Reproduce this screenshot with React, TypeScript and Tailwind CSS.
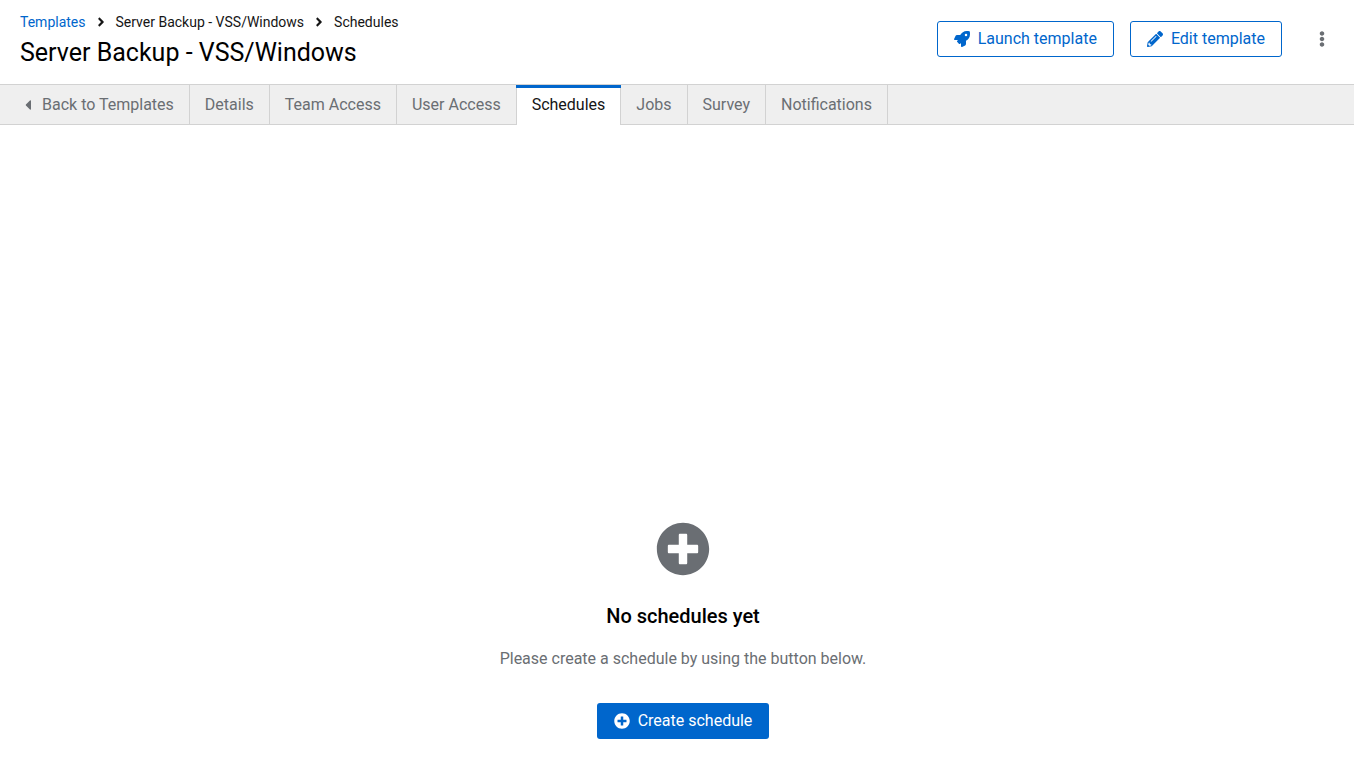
import type { ReactNode } from "react";
import {
  FaAngleRight,
  FaCaretLeft,
  FaEllipsisV,
  FaPencilAlt,
  FaPlusCircle,
  FaRocket,
} from "react-icons/fa";

const tabs = [
  "Details",
  "Team Access",
  "User Access",
  "Schedules",
  "Jobs",
  "Survey",
  "Notifications",
];

function Crumb({ children }: { children: ReactNode }) {
  return (
    <li className="flex items-center gap-2">
      <FaAngleRight className="size-3.5" aria-hidden />
      <span>{children}</span>
    </li>
  );
}

function OutlineButton({ icon, children }: { icon: ReactNode; children: ReactNode }) {
  return (
    <button
      type="button"
      className="flex h-9 items-center gap-2 rounded-[3px] border border-[#0066cc] px-4 text-[#0066cc]"
    >
      {icon}
      {children}
    </button>
  );
}

export default function App() {
  return (
    <div className="flex min-h-screen flex-col bg-white font-['Roboto','Noto_Sans',sans-serif] text-base leading-6 text-[#151515]">
      <header className="flex items-start justify-between pt-3 pr-3.5 pl-5">
        <div className="pb-[15px]">
          <nav aria-label="Breadcrumb">
            <ol className="flex items-center gap-2 text-sm leading-5">
              <li>
                <a href="#templates" className="text-[#0066cc]">
                  Templates
                </a>
              </li>
              <Crumb>Server Backup - VSS/Windows</Crumb>
              <Crumb>Schedules</Crumb>
            </ol>
          </nav>
          <h1 className="mt-[5px] text-[25px] leading-8 font-normal text-black">
            Server Backup - VSS/Windows
          </h1>
        </div>
        <div className="flex items-center gap-4 pt-[9px]">
          <OutlineButton icon={<FaRocket aria-hidden />}>Launch template</OutlineButton>
          <OutlineButton icon={<FaPencilAlt aria-hidden />}>Edit template</OutlineButton>
          <button
            type="button"
            aria-label="More actions"
            className="ml-1.5 flex h-9 w-9 items-center justify-center text-[#6a6e73]"
          >
            <FaEllipsisV aria-hidden />
          </button>
        </div>
      </header>

      <nav
        aria-label="Template sections"
        className="flex h-[41px] border-y border-[#d2d2d2] bg-[#efefef] text-[#6a6e73]"
      >
        <a
          href="#back"
          className="flex items-center gap-1.5 border-r border-[#d2d2d2] pr-[15px] pl-5"
        >
          <FaCaretLeft aria-hidden />
          Back to Templates
        </a>
        {tabs.map((tab) =>
          tab === "Schedules" ? (
            <a
              key={tab}
              href="#schedules"
              aria-current="page"
              className="-mb-px -ml-px flex flex-col text-[#151515]"
            >
              <span className="h-[3px] bg-[#0066cc]" />
              <span className="flex flex-1 items-center border-x border-[#d2d2d2] bg-white px-[15px] pb-1">
                {tab}
              </span>
            </a>
          ) : (
            <a
              key={tab}
              href="#tab"
              className="flex items-center border-r border-[#d2d2d2] px-[15px]"
            >
              {tab}
            </a>
          ),
        )}
      </nav>

      <main className="flex flex-1 flex-col items-center justify-end pr-4 pb-7 pl-7 text-center">
        <FaPlusCircle className="size-[54px] text-[#6a6e73]" aria-hidden />
        <h2 className="mt-[25px] text-xl leading-[30px] font-medium text-black">
          No schedules yet
        </h2>
        <p className="mt-4 text-[#6a6e73]">Please create a schedule by using the button below.</p>
        <button
          type="button"
          className="mt-8 flex h-9 items-center gap-2 rounded-[3px] bg-[#0066cc] px-[17px] text-white"
        >
          <FaPlusCircle aria-hidden />
          Create schedule
        </button>
      </main>
    </div>
  );
}
